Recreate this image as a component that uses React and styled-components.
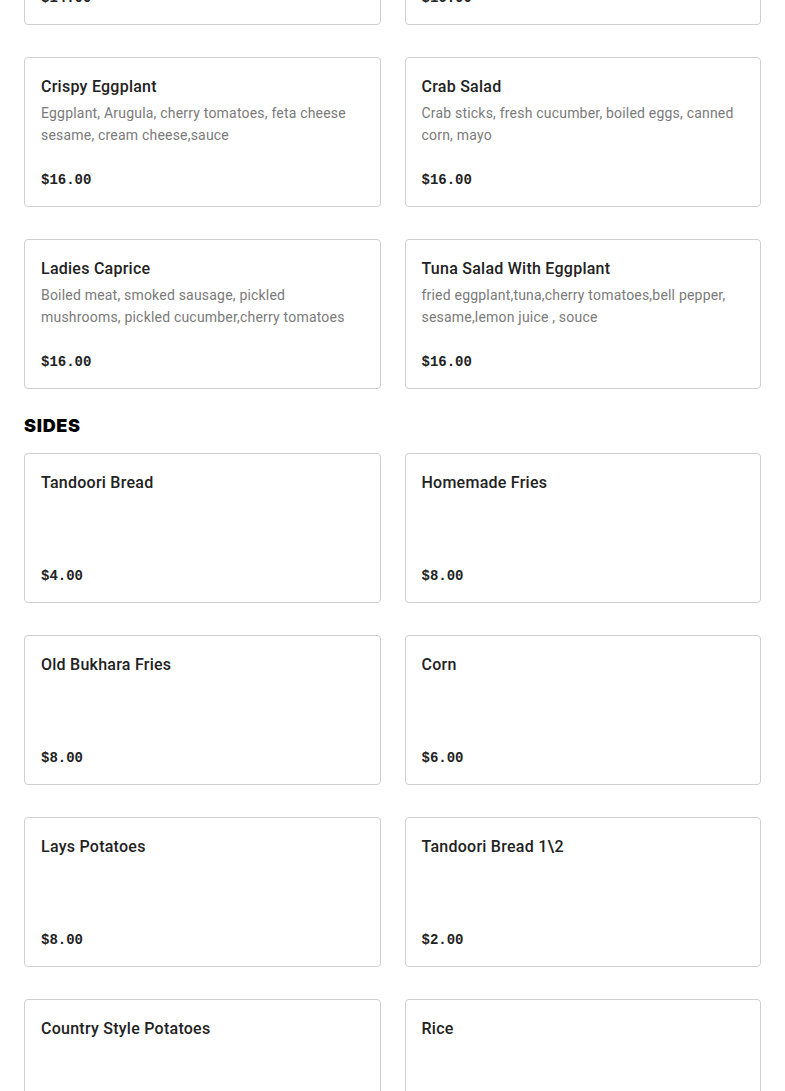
import React from "react";
import styled, { createGlobalStyle } from "styled-components";

const GlobalStyle = createGlobalStyle`
  html, body { margin: 0; padding: 0; background: #ffffff; }
  body { font-family: Roboto, "Noto Sans", Arial, sans-serif; color: #222; }
  * { box-sizing: border-box; }
`;

const Page = styled.main`
  padding: 0 24px 40px;
  margin-top: -125px;
`;

const Section = styled.section`
  display: flex;
  flex-direction: column;
`;

const SectionTitle = styled.h2`
  margin: 25px 0 15px;
  font-family: Inter, "Liberation Sans", Arial, sans-serif;
  font-weight: 900;
  font-size: 18px;
  line-height: 24px;
  letter-spacing: 0.7px;
  color: #000;
  text-transform: uppercase;
`;

const Grid = styled.div`
  display: grid;
  grid-template-columns: 1fr 1fr;
  column-gap: 24px;
  row-gap: 32px;
`;

const Card = styled.article`
  height: 150px;
  border: 1px solid #cfcfcf;
  border-radius: 4px;
  padding: 16px;
  display: flex;
  flex-direction: column;
  background: #fff;
`;

const Name = styled.h3`
  margin: 1px 0 0;
  font-size: 16px;
  line-height: 24px;
  font-weight: 500;
  letter-spacing: 0.25px;
  color: #222;
`;

const Desc = styled.p`
  margin: 3px 0 0;
  font-size: 14px;
  line-height: 22px;
  letter-spacing: 0.2px;
  color: #7a7a7a;
`;

const Price = styled.span`
  margin-top: auto;
  font-family: "Liberation Mono", "DejaVu Sans Mono", monospace;
  font-weight: 700;
  font-size: 14px;
  line-height: 20px;
  color: #222;
`;

const salads = [
  { name: "Olivier Salad", desc: "Boiled potatoes, carrots, pickles, eggs, green peas, mayo", price: "$14.00" },
  { name: "Greek Salad", desc: "Tomatoes, cucumbers, bell pepper, red onion, olives, feta cheese", price: "$16.00" },
  { name: "Crispy Eggplant", desc: "Eggplant, Arugula, cherry tomatoes, feta cheese sesame, cream cheese,sauce", price: "$16.00" },
  { name: "Crab Salad", desc: "Crab sticks, fresh cucumber, boiled eggs, canned corn, mayo", price: "$16.00" },
  { name: "Ladies Caprice", desc: "Boiled meat, smoked sausage, pickled mushrooms, pickled cucumber,cherry tomatoes", price: "$16.00" },
  { name: "Tuna Salad With Eggplant", desc: "fried eggplant,tuna,cherry tomatoes,bell pepper, sesame,lemon juice , souce", price: "$16.00" },
];

const sides = [
  { name: "Tandoori Bread", price: "$4.00" },
  { name: "Homemade Fries", price: "$8.00" },
  { name: "Old Bukhara Fries", price: "$8.00" },
  { name: "Corn", price: "$6.00" },
  { name: "Lays Potatoes", price: "$8.00" },
  { name: "Tandoori Bread 1\\2", price: "$2.00" },
  { name: "Country Style Potatoes", price: "$8.00" },
  { name: "Rice", price: "$6.00" },
];

function MenuCard({ item }) {
  return (
    <Card>
      <Name>{item.name}</Name>
      {item.desc && <Desc>{item.desc}</Desc>}
      <Price>{item.price}</Price>
    </Card>
  );
}

export default function App() {
  return (
    <>
      <GlobalStyle />
      <Page>
        <Section>
          <Grid>
            {salads.map((it) => (
              <MenuCard key={it.name} item={it} />
            ))}
          </Grid>
        </Section>
        <Section>
          <SectionTitle>Sides</SectionTitle>
          <Grid>
            {sides.map((it) => (
              <MenuCard key={it.name} item={it} />
            ))}
          </Grid>
        </Section>
      </Page>
    </>
  );
}
